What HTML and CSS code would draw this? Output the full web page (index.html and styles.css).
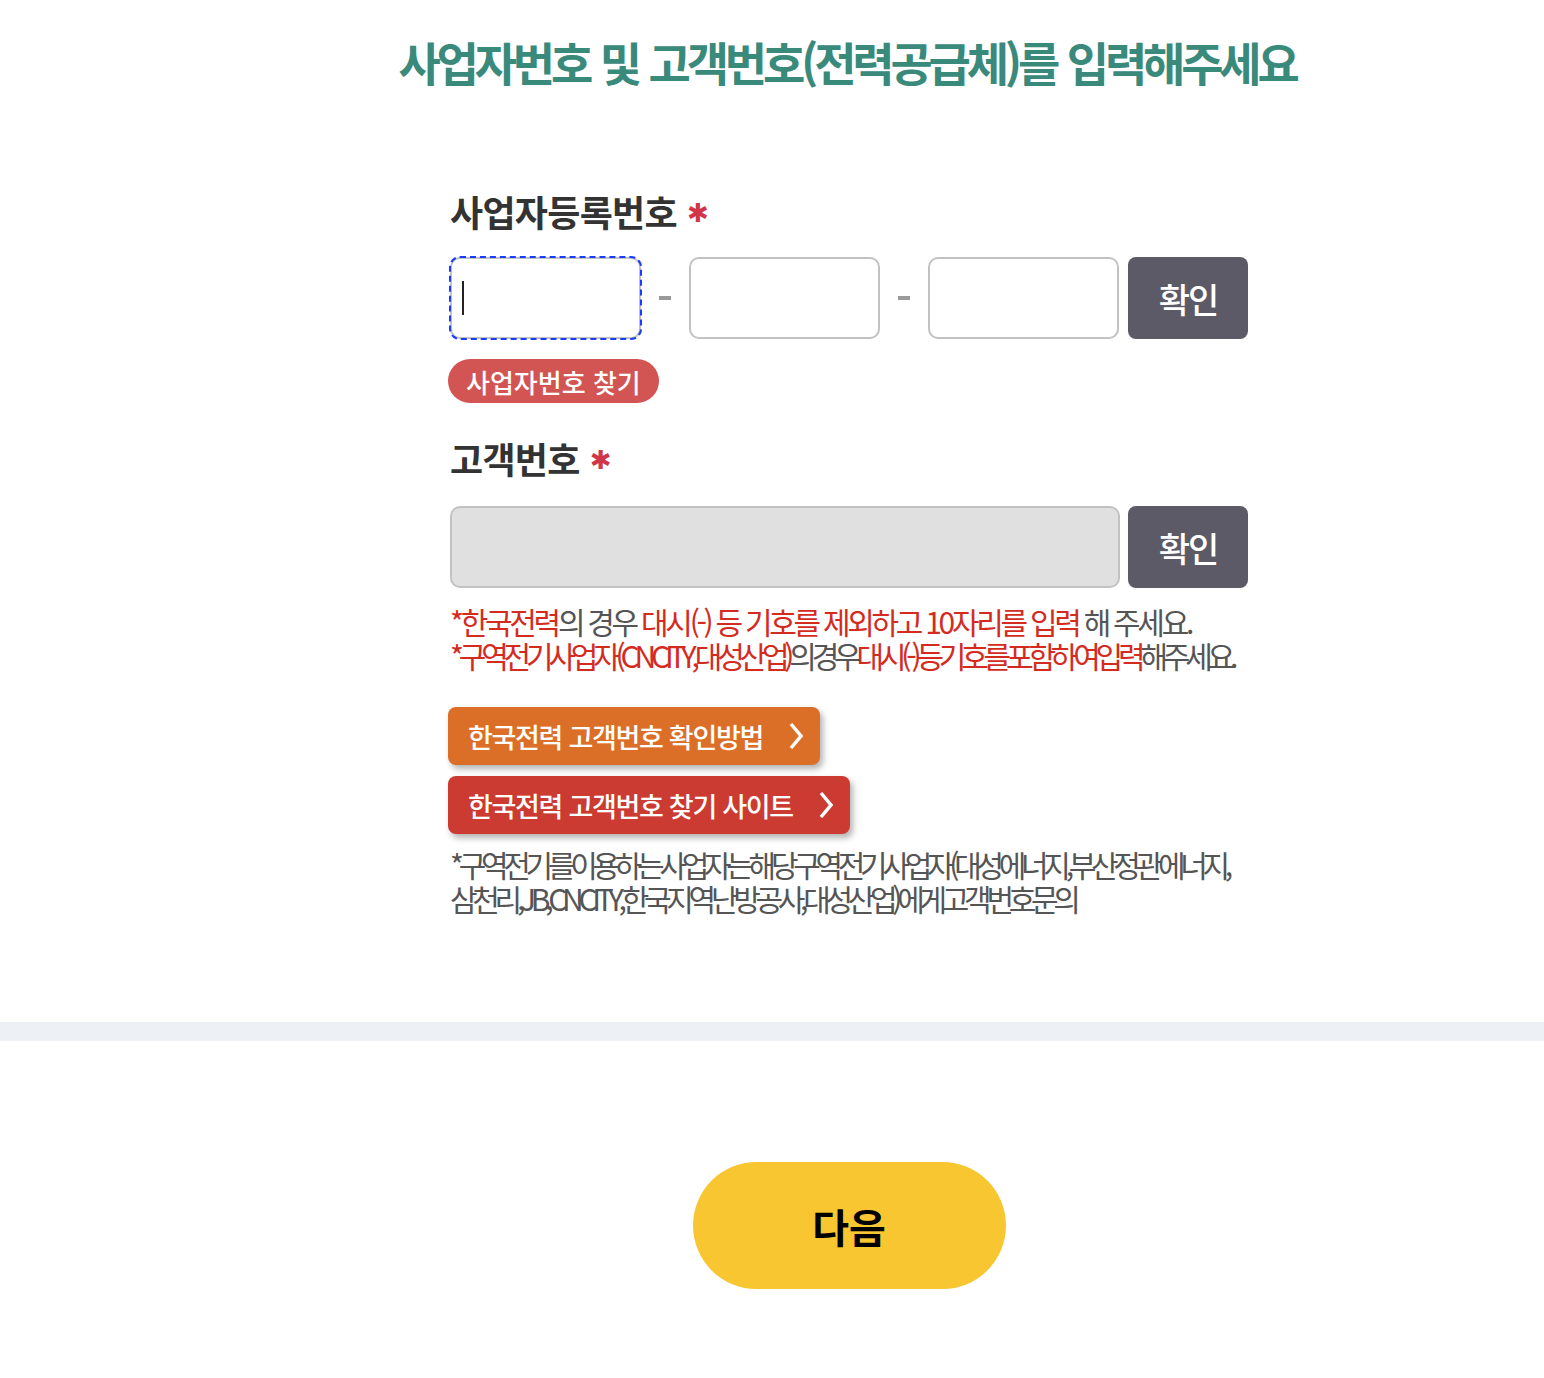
FILE: index.html
```html
<!DOCTYPE html>
<html lang="ko">
<head>
    <meta charset="UTF-8">
    <meta name="viewport" content="width=device-width, initial-scale=1.0">
    <title>사업자번호 및 고객번호 입력</title>
    <link rel="stylesheet" href="styles.css">
</head>
<body>
    <div class="main">
        <h1 class="title">사업자번호 및 고객번호(전력공급체)를 입력해주세요</h1>

        <div class="form">
            <!-- 사업자등록번호 -->
            <h2 class="label label-first">사업자등록번호<span class="req">✱</span></h2>
            <div class="row row-biz">
                <div class="field field-biz focused">
                    <input type="text" class="input">
                    <span class="caret"></span>
                </div>
                <span class="dash"></span>
                <div class="field field-biz">
                    <input type="text" class="input">
                </div>
                <span class="dash"></span>
                <div class="field field-biz">
                    <input type="text" class="input">
                </div>
                <button class="btn-check">확인</button>
            </div>
            <button class="btn-find">사업자번호 찾기</button>

            <!-- 고객번호 -->
            <h2 class="label label-second">고객번호<span class="req">✱</span></h2>
            <div class="row row-cust">
                <div class="field field-wide">
                    <input type="text" class="input input-disabled" disabled>
                </div>
                <button class="btn-check">확인</button>
            </div>

            <p class="notice notice-1"><span class="red">*한국전력</span>의 경우 <span class="red">대시(-) 등 기호를 제외하고 10자리를 입력</span> 해 주세요.</p>
            <p class="notice notice-2"><span class="red">*구역전기사업자(CNCITY,대성산업)</span>의경우<span class="red">대시(-)등기호를포함하여입력</span>해주세요.</p>

            <div class="links">
                <a class="link-btn link-orange" href="#">한국전력 고객번호 확인방법
                    <svg class="chev" width="16" height="28" viewBox="0 0 16 28"><polyline points="3,2 13,14 3,26" fill="none" stroke="#fff" stroke-width="3.5"/></svg>
                </a>
                <a class="link-btn link-red" href="#">한국전력 고객번호 찾기 사이트
                    <svg class="chev" width="16" height="28" viewBox="0 0 16 28"><polyline points="3,2 13,14 3,26" fill="none" stroke="#fff" stroke-width="3.5"/></svg>
                </a>
            </div>

            <p class="info">*구역전기를이용하는사업자는해당구역전기사업자(대성에너지,부산정관에너지,<br>삼천리,JB,CNCITY,한국지역난방공사,대성산업)에게고객번호문의</p>
        </div>
    </div>

    <div class="band"></div>

    <div class="main bottom">
        <button class="btn-next">다음</button>
    </div>
</body>
</html>
```

FILE: styles.css
```css
body {
    margin: 0;
    font-family: "Noto Sans CJK KR", "Noto Sans", sans-serif;
    background: #fff;
}

.main {
    padding-left: 154px;
}

.title {
    margin: 0;
    padding-top: 31px;
    padding-right: 4px;
    text-align: center;
    font-size: 46px;
    line-height: 60px;
    font-weight: 700;
    color: #3a8a7b;
    letter-spacing: -4.2px;
    word-spacing: 2px;
}

.form {
    width: 798px;
    margin: 0 auto;
    padding-top: 98px;
    padding-bottom: 107px;
}

.label {
    margin: 0;
    height: 44px;
    font-size: 36px;
    line-height: 44px;
    font-weight: 700;
    color: #333;
    letter-spacing: -0.7px;
    display: flex;
    align-items: center;
}

.req {
    color: #d0354a;
    font-family: "DejaVu Sans", sans-serif;
    font-size: 26px;
    line-height: 1;
    margin-left: 10px;
    margin-top: 4px;
}

.label-second {
    margin-top: 33px;
}

.row {
    display: flex;
    align-items: center;
    height: 82px;
}

.row-biz {
    margin-top: 24px;
}

.row-cust {
    margin-top: 26px;
}

.field {
    position: relative;
    height: 82px;
}

.field-biz {
    width: 191px;
}

.field-wide {
    width: 670px;
}

.input {
    width: 100%;
    height: 100%;
    box-sizing: border-box;
    border: 2px solid #c2c2c2;
    border-radius: 10px;
    background: #fff;
    font-size: 26px;
    padding: 0 12px;
    outline: none;
}

.input-disabled {
    background: #e0e0e0;
}

.focused {
    outline: 2px dashed #1a3cff;
    outline-offset: -1px;
    border-radius: 10px;
}

.caret {
    position: absolute;
    left: 12px;
    top: 24px;
    width: 2px;
    height: 34px;
    background: #222;
}

.dash {
    width: 12px;
    height: 4px;
    margin: 0 18px;
    background: #9a9a9a;
}

.btn-check {
    margin-left: auto;
    width: 120px;
    height: 82px;
    border: none;
    border-radius: 8px;
    background: #5c5a67;
    color: #fff;
    font-family: inherit;
    font-size: 34px;
    font-weight: 500;
    letter-spacing: -2px;
}

.btn-find {
    margin-top: 20px;
    margin-left: -2px;
    height: 44px;
    padding: 0 18px;
    border: none;
    border-radius: 22px;
    background: #d35553;
    color: #fff;
    font-family: inherit;
    font-size: 26px;
    font-weight: 500;
    letter-spacing: 0;
}

.notice {
    margin: 0;
    font-size: 30px;
    line-height: 34px;
    color: #555;
    white-space: nowrap;
}

.notice-1 {
    margin-top: 16px;
    letter-spacing: -3.3px;
}

.notice-2 {
    letter-spacing: -5.2px;
}

.red {
    color: #d42b1f;
}

.links {
    margin-top: 35px;
    display: flex;
    flex-direction: column;
    align-items: flex-start;
    gap: 11px;
}

.link-btn {
    display: flex;
    align-items: center;
    height: 58px;
    padding: 0 16px 0 20px;
    margin-left: -2px;
    border-radius: 8px;
    color: #fff;
    text-decoration: none;
    font-size: 27px;
    font-weight: 500;
    letter-spacing: -1.3px;
    box-shadow: 3px 4px 6px rgba(0, 0, 0, 0.3);
}

.link-orange {
    background: #dc6f27;
}

.link-red {
    background: #cc3b31;
}

.chev {
    margin-left: 25px;
}

.info {
    margin: 13px 0 0;
    font-size: 30px;
    line-height: 34px;
    color: #555;
    letter-spacing: -5.3px;
    white-space: nowrap;
}

.band {
    height: 19px;
    background: #edf0f4;
}

.bottom {
    display: flex;
    justify-content: center;
    padding-top: 121px;
    padding-bottom: 88px;
}

.btn-next {
    width: 313px;
    height: 127px;
    border: none;
    border-radius: 64px;
    background: #f7c631;
    color: #000;
    font-family: inherit;
    font-size: 40px;
    font-weight: 700;
}
```
